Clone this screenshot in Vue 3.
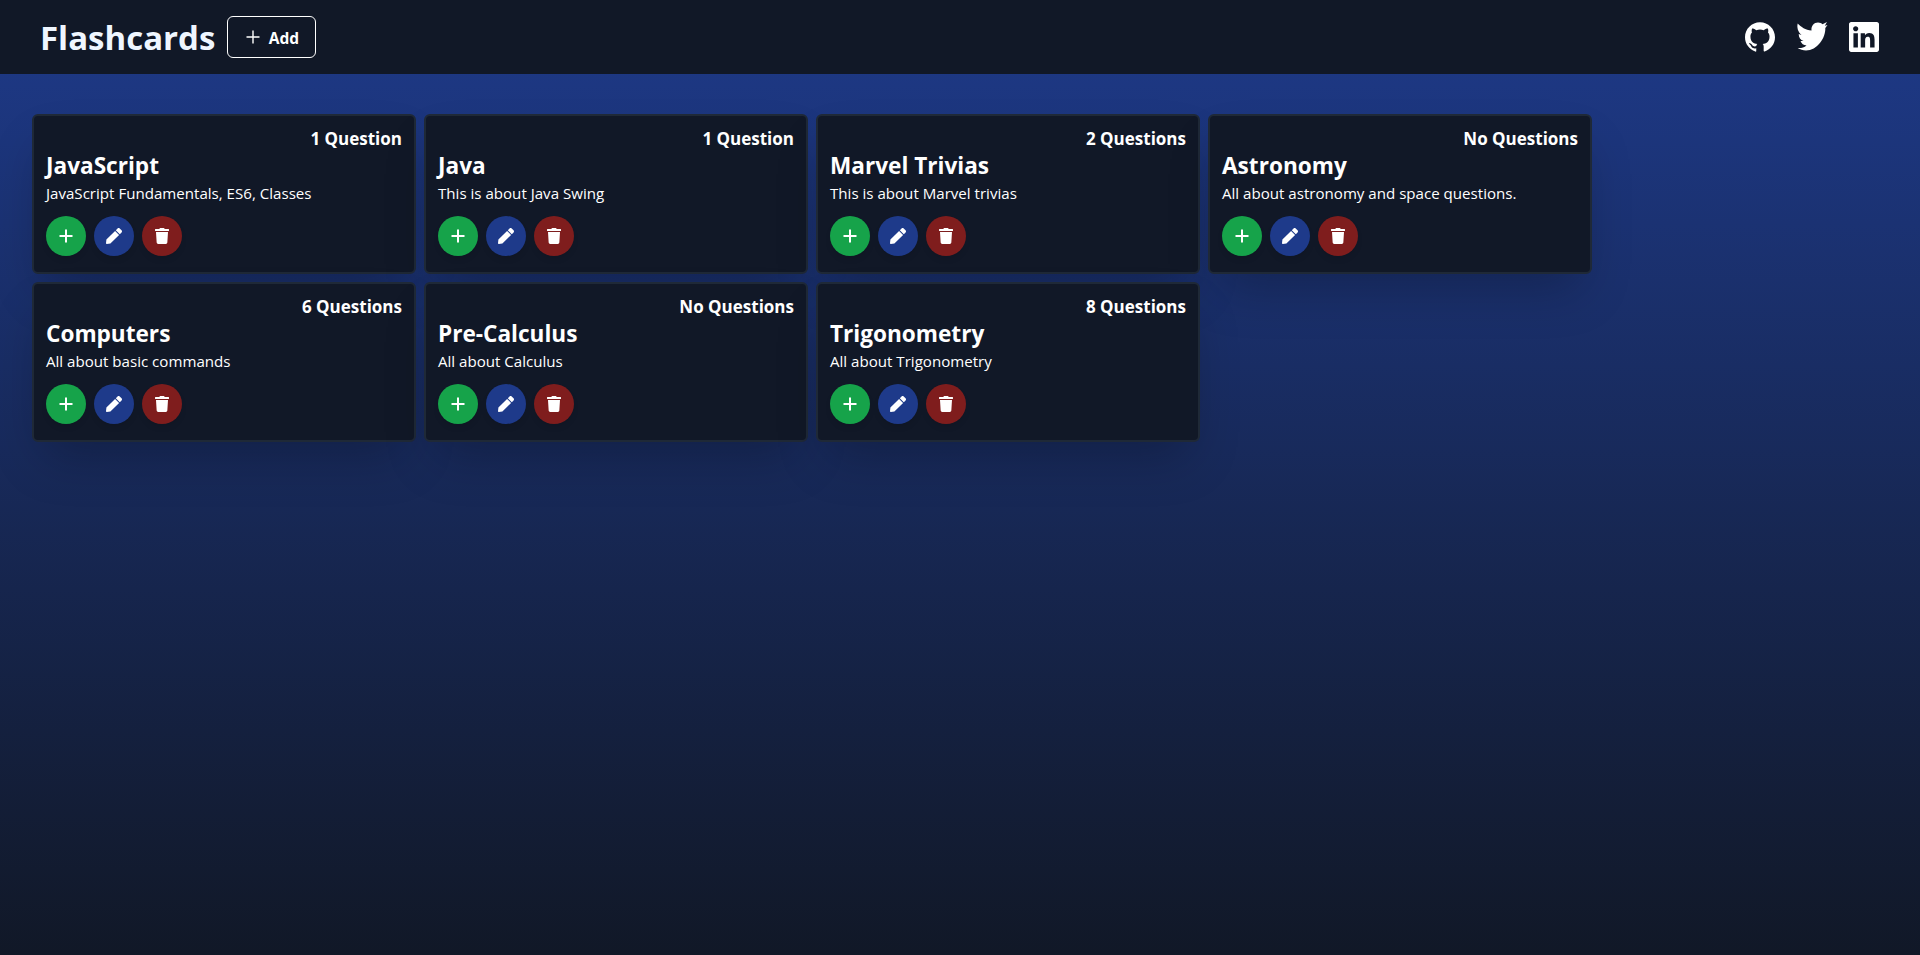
<template>
  <div class="page">
    <header class="topbar">
      <div class="brand">
        <h1 class="logo">Flashcards</h1>
        <button class="add-btn">
          <svg class="add-plus" viewBox="0 0 16 16"><path d="M8 1.5v13M1.5 8h13" /></svg>
          <span class="add-label">Add</span>
        </button>
      </div>
      <div class="socials">
        <svg class="social" viewBox="-0.8 -0.8 25.6 25.6"><path d="M12 .297c-6.63 0-12 5.373-12 12 0 5.303 3.438 9.8 8.205 11.385.6.113.82-.258.82-.577 0-.285-.01-1.04-.015-2.04-3.338.724-4.042-1.61-4.042-1.61C4.422 18.07 3.633 17.7 3.633 17.7c-1.087-.744.084-.729.084-.729 1.205.084 1.838 1.236 1.838 1.236 1.07 1.835 2.809 1.305 3.495.998.108-.776.417-1.305.76-1.605-2.665-.3-5.466-1.332-5.466-5.93 0-1.31.465-2.38 1.235-3.22-.135-.303-.54-1.523.105-3.176 0 0 1.005-.322 3.3 1.23.96-.267 1.98-.399 3-.405 1.02.006 2.04.138 3 .405 2.28-1.552 3.285-1.23 3.285-1.23.645 1.653.24 2.873.12 3.176.765.84 1.23 1.91 1.23 3.22 0 4.61-2.805 5.625-5.475 5.92.42.36.81 1.096.81 2.22 0 1.606-.015 2.896-.015 3.286 0 .315.21.69.825.57C20.565 22.092 24 17.592 24 12.297c0-6.627-5.373-12-12-12" /></svg>
        <svg class="social" viewBox="6 7 32 32"><path d="M7.7 9.5C11 13 15.5 16 21.5 16.5 21 12 24 8.5 28 8.5c2 0 3.500.8 4.500 1.800L37 8l-2.200 3.800 2.700-.8-2.200 3c.5 10-8.300 22.500-19.300 22.500-3 0-6-1-8.300-2.500 3.300.3 6.300-.5 8.800-2.500-3-.1-5-2-6-4.500h3c-3-1-4.800-3.500-4.800-7l2.800 1c-3.500-3-4.800-7.500-3.800-11.500z" /></svg>
        <svg class="social" viewBox="-0.8 -0.8 25.6 25.6"><path d="M20.447 20.452h-3.554v-5.569c0-1.328-.027-3.037-1.852-3.037-1.853 0-2.136 1.445-2.136 2.939v5.667H9.351V9h3.414v1.561h.046c.477-.9 1.637-1.85 3.37-1.85 3.601 0 4.267 2.37 4.267 5.455v6.286zM5.337 7.433c-1.144 0-2.063-.926-2.063-2.065 0-1.138.92-2.063 2.063-2.063 1.14 0 2.064.925 2.064 2.063 0 1.139-.925 2.065-2.064 2.065zm1.782 13.019H3.555V9h3.564v11.452zM22.225 0H1.771C.792 0 0 .774 0 1.729v20.542C0 23.227.792 24 1.771 24h20.451C23.2 24 24 23.227 24 22.271V1.729C24 .774 23.2 0 22.222 0h.003z" /></svg>
      </div>
    </header>

    <main class="deck-list">
      <article v-for="deck in decks" :key="deck.title" class="deck">
        <div class="count">{{ deck.count }}</div>
        <h2 class="title">{{ deck.title }}</h2>
        <p class="desc">{{ deck.desc }}</p>
        <div class="actions">
          <button class="round green">
            <svg class="plus" viewBox="0 0 16 16"><path d="M8 1.500v13M1.500 8h13" /></svg>
          </button>
          <button class="round blue">
            <svg class="pen" viewBox="0 0 512 512"><path d="M290.74 93.24l128.02 128.02-277.99 277.99-114.14 12.6C11.35 513.54-1.56 500.62.14 485.34l12.7-114.22 277.9-277.88zm207.2-19.06l-60.11-60.11c-18.75-18.75-49.16-18.75-67.91 0l-56.55 56.55 128.02 128.02 56.55-56.55c18.75-18.76 18.75-49.16 0-67.91z" /></svg>
          </button>
          <button class="round red">
            <svg class="trash" viewBox="0 0 448 512"><path d="M432 32H312l-9.4-18.7A24 24 0 0 0 281.1 0H166.8a23.72 23.72 0 0 0-21.4 13.3L136 32H16A16 16 0 0 0 0 48v32a16 16 0 0 0 16 16h416a16 16 0 0 0 16-16V48a16 16 0 0 0-16-16zM53.2 467a48 48 0 0 0 47.9 45h245.8a48 48 0 0 0 47.9-45L416 128H32z" /></svg>
          </button>
        </div>
      </article>
    </main>
  </div>
</template>

<script setup>
const decks = [
  { title: 'JavaScript', desc: 'JavaScript Fundamentals, ES6, Classes', count: '1 Question' },
  { title: 'Java', desc: 'This is about Java Swing', count: '1 Question' },
  { title: 'Marvel Trivias', desc: 'This is about Marvel trivias', count: '2 Questions' },
  { title: 'Astronomy', desc: 'All about astronomy and space questions.', count: 'No Questions' },
  { title: 'Computers', desc: 'All about basic commands', count: '6 Questions' },
  { title: 'Pre-Calculus', desc: 'All about Calculus', count: 'No Questions' },
  { title: 'Trigonometry', desc: 'All about Trigonometry', count: '8 Questions' }
]
</script>

<style>
html, body {
  margin: 0;
  background: #111827;
}
</style>

<style scoped>
.page {
  min-height: 955px;
  background: linear-gradient(to bottom, #1e3a8a, #111827);
  font-family: "Open Sans", "Noto Sans", sans-serif;
  color: #fff;
}
.topbar {
  height: 74px;
  padding: 0 40px;
  background: #111827;
  display: flex;
  align-items: center;
  justify-content: space-between;
}
.brand {
  display: flex;
  align-items: center;
  gap: 12px;
}
.logo {
  margin: 2px 0 0;
  font-size: 33px;
  line-height: 40px;
  font-weight: 700;
  color: #eff6ff;
}
.add-btn {
  width: 89px;
  height: 42px;
  display: flex;
  align-items: center;
  justify-content: center;
  gap: 8px;
  border: 1px solid #fff;
  border-radius: 6px;
  background: transparent;
  color: #fff;
  font: 700 15.5px "Open Sans", sans-serif;
}
.add-label {
  padding-top: 1px;
}
.add-plus {
  width: 16px;
  height: 16px;
  fill: none;
  stroke: #fff;
  stroke-width: 1.4;
}
.socials {
  display: flex;
  gap: 20px;
}
.social {
  width: 32px;
  height: 32px;
  fill: #fff;
}
.deck-list {
  padding: 40px 28px 0;
  display: flex;
  flex-wrap: wrap;
  align-content: flex-start;
}
.deck {
  box-sizing: border-box;
  width: 384px;
  height: 160px;
  margin: 0 4px 8px;
  padding: 12px 12px 0;
  border: 2px solid #1f2937;
  border-radius: 6px;
  background: #111827;
  box-shadow: 0 25px 50px -12px rgba(0, 0, 0, 0.25);
}
.count {
  text-align: right;
  font-size: 17px;
  line-height: 22px;
  font-weight: 700;
}
.title {
  margin: 0;
  font-size: 22.6px;
  line-height: 32px;
  font-weight: 700;
}
.desc {
  margin: 0 0 12px;
  font-size: 15.1px;
  line-height: 22px;
}
.actions {
  display: flex;
  gap: 8px;
}
.round {
  width: 40px;
  height: 40px;
  padding: 0;
  border: none;
  border-radius: 50%;
  display: flex;
  align-items: center;
  justify-content: center;
  box-shadow: 0 4px 6px -1px rgba(0, 0, 0, 0.1);
}
.green { background: #16a34a; }
.blue { background: #1e3a8a; }
.red { background: #7f1d1d; }
.plus {
  width: 16px;
  height: 16px;
  fill: none;
  stroke: #fff;
  stroke-width: 2;
}
.pen {
  width: 16px;
  height: 16px;
  fill: #fff;
}
.trash {
  width: 14px;
  height: 16px;
  fill: #fff;
}
</style>
